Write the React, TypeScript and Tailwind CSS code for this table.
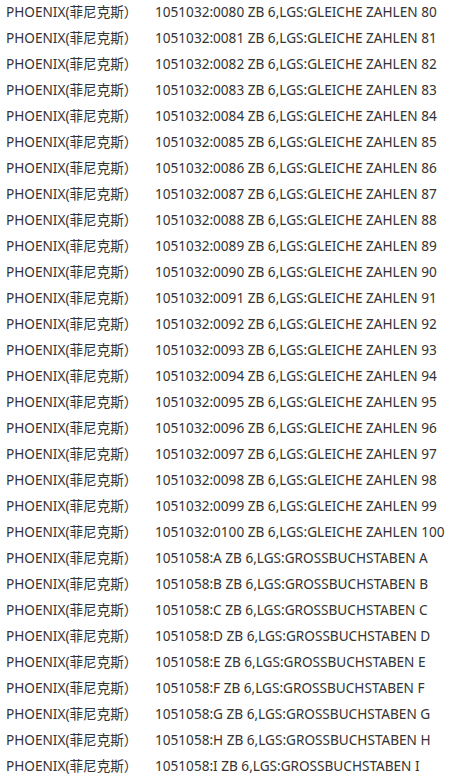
const rows: [string, string][] = [];
for (let i = 80; i <= 100; i++) {
  rows.push(['1051032:' + String(i).padStart(4, '0'), 'GLEICHE ZAHLEN ' + i]);
}
for (const c of 'ABCDEFGHI') {
  rows.push(['1051058:' + c, 'GROSSBUCHSTABEN ' + c]);
}

export default function App() {
  return (
    <div className="w-[475px] h-[781px] bg-white overflow-hidden text-[#333] text-[13.6px] font-['Noto_Sans','Noto_Sans_CJK_SC',sans-serif]">
      <ul className="-mt-px">
        {rows.map(([code, label]) => (
          <li key={code} className="flex h-[26px] items-center whitespace-nowrap">
            <span className="w-[155px] pl-[6px]">PHOENIX(菲尼克斯）</span>
            <span>{code} ZB 6,LGS:{label}</span>
          </li>
        ))}
      </ul>
    </div>
  );
}
